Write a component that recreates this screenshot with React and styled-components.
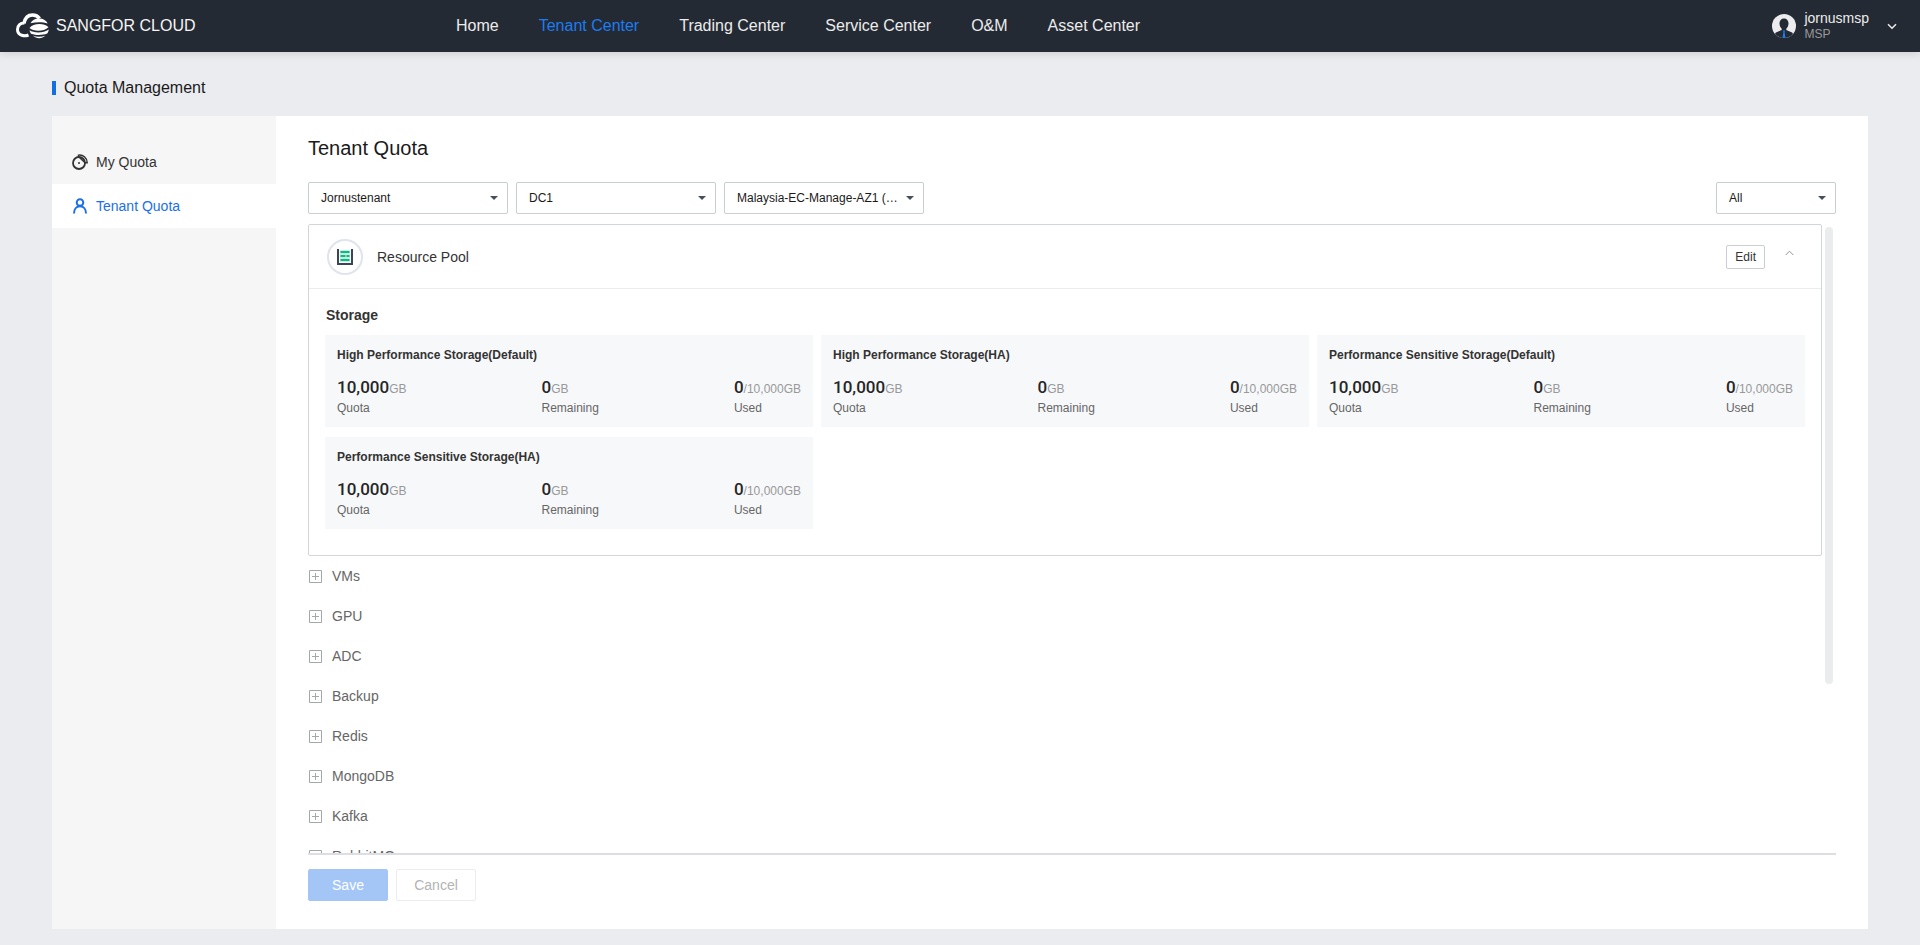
import React, { useState } from "react";
import styled, { createGlobalStyle } from "styled-components";

const GlobalStyle = createGlobalStyle`
  *, *::before, *::after {
    box-sizing: border-box;
  }

  body {
    margin: 0;
    background: #ebecf0;
    color: #333;
    font-family: "Liberation Sans", Arial, sans-serif;
    font-size: 14px;
  }

  button, select {
    font-family: inherit;
    color: inherit;
  }

  h1, h2, h3, h4, p, dl, dd, ul {
    margin: 0;
    padding: 0;
  }
`;

const Page = styled.div`
  height: 100vh;
  display: flex;
  flex-direction: column;
`;

const Header = styled.header`
  flex: none;
  height: 52px;
  display: flex;
  align-items: center;
  background: #242a33;
  box-shadow: 0 2px 8px rgba(0, 0, 0, 0.12);
`;

const Brand = styled.a`
  width: 456px;
  padding-left: 16px;
  display: flex;
  align-items: center;
  gap: 6px;
  color: #f5f5f5;
  font-size: 16px;
  text-decoration: none;
`;

const Nav = styled.nav`
  flex: 1;
  display: flex;
  gap: 40px;
`;

const NavLink = styled.a`
  color: ${(props) => (props.$active ? "#1c7cf2" : "#ececed")};
  font-size: 16px;
  line-height: 50px;
  text-decoration: none;
`;

const UserMenu = styled.button`
  display: flex;
  align-items: center;
  gap: 8px;
  padding: 0 23px 0 0;
  border: 0;
  background: none;
  text-align: left;
  cursor: pointer;
`;

const UserText = styled.span`
  display: flex;
  flex-direction: column;
  margin-right: 10px;
`;

const UserName = styled.span`
  color: #ececed;
  font-size: 14px;
  line-height: 16px;
`;

const UserRole = styled.span`
  color: #98999c;
  font-size: 12px;
  line-height: 16px;
`;

const Body = styled.div`
  flex: 1;
  min-height: 0;
  display: flex;
  flex-direction: column;
  padding: 0 52px 16px;
`;

const PageTitle = styled.h1`
  display: flex;
  align-items: center;
  gap: 8px;
  height: 64px;
  padding-top: 7px;
  color: #1a1a1a;
  font-size: 16px;
  font-weight: normal;

  &::before {
    content: "";
    width: 4px;
    height: 14px;
    background: #136ee0;
  }
`;

const Panel = styled.div`
  flex: 1;
  min-height: 0;
  display: flex;
  background: #fff;
`;

const Sidebar = styled.nav`
  flex: none;
  width: 224px;
  padding-top: 24px;
  background: #f6f6f6;
`;

const SideItem = styled.button`
  width: 100%;
  height: 44px;
  display: flex;
  align-items: center;
  gap: 8px;
  padding: 0 20px;
  border: 0;
  background: ${(props) => (props.$active ? "#fff" : "transparent")};
  color: ${(props) => (props.$active ? "#1b6fe8" : "#333")};
  font-size: 14px;
  cursor: pointer;
`;

const Main = styled.main`
  flex: 1;
  min-width: 0;
  display: flex;
  flex-direction: column;
  padding: 0 32px 28px;
`;

const MainTitle = styled.h2`
  color: #1a1a1a;
  font-size: 20px;
  font-weight: normal;
  line-height: 64px;
`;

const Filters = styled.div`
  display: flex;
  gap: 8px;
  margin-top: 2px;
  margin-bottom: 10px;
`;

const SelectBox = styled.label`
  position: relative;
  width: ${(props) => props.$width};
  margin-left: ${(props) => (props.$end ? "auto" : "0")};

  &::after {
    content: "";
    position: absolute;
    top: 14px;
    right: 10px;
    border: 4px solid transparent;
    border-top-color: #474f5c;
    border-bottom: 0;
    pointer-events: none;
  }
`;

const Select = styled.select`
  width: 100%;
  height: 32px;
  padding: 0 20px 0 12px;
  border: 1px solid #c9cdd6;
  border-radius: 2px;
  background: #fff;
  color: #1a1a1a;
  font-size: 12px;
  appearance: none;
`;

const ScrollArea = styled.div`
  flex: 1;
  min-height: 0;
  display: flex;
  gap: 3px;
  overflow: hidden;
  border-bottom: 2px solid #dcdee3;
`;

const List = styled.div`
  flex: 1;
  min-width: 0;
`;

const Track = styled.div`
  width: 8px;
  margin-right: 3px;
  padding-top: 3px;
`;

const Thumb = styled.div`
  height: 73%;
  border-radius: 4px;
  background: #ebecee;
`;

const Card = styled.section`
  border: 1px solid #d3d5dc;
  border-radius: 2px;
`;

const CardHeader = styled.div`
  height: 64px;
  display: flex;
  align-items: center;
  padding: 0 19px 0 18px;
  border-bottom: 1px solid #ebecf0;
`;

const PoolIcon = styled.span`
  width: 36px;
  height: 36px;
  display: flex;
  align-items: center;
  justify-content: center;
  border: 2px solid #e1e4ed;
  border-radius: 50%;
`;

const CardTitle = styled.h3`
  flex: 1;
  margin-left: 14px;
  font-size: 14px;
  font-weight: normal;
`;

const EditButton = styled.button`
  height: 24px;
  padding: 0 8px;
  border: 1px solid #c9cdd6;
  border-radius: 2px;
  background: #fff;
  font-size: 12px;
  cursor: pointer;
`;

const FoldButton = styled.button`
  display: flex;
  margin-left: 12px;
  padding: 0 8px 8px;
  border: 0;
  background: none;
  cursor: pointer;
`;

const CardBody = styled.div`
  padding: 16px 16px 26px;
`;

const GroupTitle = styled.h4`
  margin-bottom: 10px;
  padding-left: 1px;
  font-size: 14px;
  line-height: 20px;
`;

const Tiles = styled.div`
  display: grid;
  grid-template-columns: repeat(3, 1fr);
  gap: 10px 8px;
`;

const Tile = styled.article`
  padding: 12px 12px 10px;
  background: #f7f8fa;
`;

const TileTitle = styled.h5`
  margin: 0 0 16px;
  font-size: 12px;
  line-height: 16px;
`;

const Stats = styled.dl`
  display: flex;
  justify-content: space-between;
`;

const Stat = styled.div`
  display: flex;
  flex-direction: column-reverse;
`;

const StatLabel = styled.dt`
  color: #666;
  font-size: 12px;
  line-height: 18px;
`;

const StatValue = styled.dd`
  height: 20px;
  color: #999;
  font-size: 12px;
  line-height: 20px;

  strong {
    color: #262626;
    font-family: Roboto, "Liberation Sans", sans-serif;
    font-size: 17px;
    font-weight: 500;
    line-height: 1;
  }
`;

const Group = styled.button`
  width: 100%;
  height: 40px;
  display: flex;
  align-items: center;
  gap: 10px;
  padding: 0 1px;
  border: 0;
  background: none;
  color: #666;
  font-size: 14px;
  cursor: pointer;
`;

const Footer = styled.div`
  flex: none;
  display: flex;
  gap: 8px;
  padding-top: 14px;
`;

const FooterButton = styled.button`
  width: 80px;
  height: 32px;
  border: 1px solid ${(props) => (props.$primary ? "#a3c6f7" : "#ebecf0")};
  border-radius: 2px;
  background: ${(props) => (props.$primary ? "#a3c6f7" : "#fff")};
  color: ${(props) => (props.$primary ? "#fff" : "#b3b3b3")};
  font-size: 14px;
`;

const Logo = () => (
  <svg width="34" height="26" viewBox="0 0 34 26" fill="none">
    <path
      d="M12.500 22C9 23.500 1.500 23 1.500 16.500C1.500 12.500 4.500 9.800 8.500 10"
      stroke="#fff"
      strokeWidth="3"
    />
    <path
      d="M8 10.500C9 4.500 12.500 2 16.500 2C19.500 2 22 3.200 23.500 5.500"
      stroke="#fff"
      strokeWidth="3.500"
    />
    <path d="M14.500 10.300C16 7.500 19 5.500 23 5.500C27.500 5.500 30.500 7.500 31.700 10.500C27 8.800 20 8.800 14.500 10.300Z" fill="#fff" />
    <path d="M13.500 15C17 10 28 9.500 32.500 14.200C28 18.500 18 19 13.500 15Z" fill="#fff" />
    <path d="M13.500 17.300C18 20.300 27.500 20.300 32.800 16.500C32.500 18.300 32 19.500 31.200 20.600C26.500 22.500 20 22.500 15 20.700C14.200 19.600 13.700 18.500 13.500 17.300Z" fill="#fff" />
    <path d="M17 22.800C20.500 24 25.500 24 29.300 22.700C26 26 20.500 26 17 22.800Z" fill="#fff" />
  </svg>
);

const Avatar = () => (
  <svg width="24" height="24" viewBox="0 0 24 24">
    <circle cx="12" cy="12" r="12" fill="#ececee" />
    <path
      d="M12 4.500C9 4.500 7.300 6.800 7.500 9.800C7.600 12 8.600 13.700 9.700 14.800V16L4.500 18.200C3.600 18.600 3.200 19.200 3 20C5.300 22.600 8.500 24 12 24C15.500 24 18.700 22.600 21 20C20.800 19.200 20.400 18.600 19.500 18.200L14.300 16V14.800C15.400 13.700 16.400 12 16.500 9.800C16.700 6.800 15 4.500 12 4.500Z"
      fill="#242a33"
    />
    <path d="M11 16.500H13L12.600 18.300L13.500 24H10.500L11.400 18.300Z" fill="#1c7cf2" />
  </svg>
);

const QuotaIcon = () => (
  <svg width="16" height="16" viewBox="0 0 16 16" fill="none" stroke="currentColor">
    <circle cx="7" cy="9" r="6" strokeWidth="1.800" />
    <path d="M6.500 3.500V1.200C11 .6 15 3.500 15.200 8.800H12.500" strokeWidth="1.500" />
    <path d="M7.500 3.500L12.800 8.500" strokeWidth="1.500" />
    <circle cx="7" cy="9" r="1" fill="currentColor" stroke="none" />
  </svg>
);

const TenantIcon = () => (
  <svg width="16" height="16" viewBox="0 0 16 16" fill="none" stroke="currentColor" strokeWidth="2">
    <circle cx="8" cy="4.500" r="3.300" />
    <path d="M2 15.500C2 11.300 4.300 8.300 8 8.300C11.700 8.300 14 11.300 14 15.500" />
  </svg>
);

const StorageIcon = () => (
  <svg width="16" height="16" viewBox="0 0 16 16">
    <path d="M0 0H2V14H14V0H16V16H0Z" fill="#3b4559" />
    <path d="M3 1H13V13H3Z" fill="#c5efe1" />
    <path d="M3.500 2H12.500V4H3.500ZM3.500 6H8.500V8H3.500ZM9.500 6H12.500V8H9.500ZM3.500 10H12.500V12H3.500Z" fill="#0fb880" />
  </svg>
);

const PlusBox = () => (
  <svg width="13" height="13" viewBox="0 0 13 13" fill="none" stroke="#a3a8ad">
    <path d="M.5 .5H12.500V12.500H.5ZM3 6.500H10M6.500 3V10" />
  </svg>
);

const tiles = [
  "High Performance Storage(Default)",
  "High Performance Storage(HA)",
  "Performance Sensitive Storage(Default)",
  "Performance Sensitive Storage(HA)",
];

const groups = ["VMs", "GPU", "ADC", "Backup", "Redis", "MongoDB", "Kafka", "RabbitMQ"];

const navItems = [
  "Home",
  "Tenant Center",
  "Trading Center",
  "Service Center",
  "O&M",
  "Asset Center",
];

const Filter = ({ label, value, width = "200px", end }) => (
  <SelectBox $width={width} $end={end}>
    <Select aria-label={label}>
      <option>{value}</option>
    </Select>
  </SelectBox>
);

const StorageTile = ({ title }) => (
  <Tile>
    <TileTitle>{title}</TileTitle>
    <Stats>
      <Stat>
        <StatLabel>Quota</StatLabel>
        <StatValue>
          <strong>10,000</strong>GB
        </StatValue>
      </Stat>
      <Stat>
        <StatLabel>Remaining</StatLabel>
        <StatValue>
          <strong>0</strong>GB
        </StatValue>
      </Stat>
      <Stat>
        <StatLabel>Used</StatLabel>
        <StatValue>
          <strong>0</strong>/10,000GB
        </StatValue>
      </Stat>
    </Stats>
  </Tile>
);

const ResourcePool = () => {
  const [open, setOpen] = useState(true);

  return (
    <Card>
      <CardHeader>
        <PoolIcon>
          <StorageIcon />
        </PoolIcon>
        <CardTitle>Resource Pool</CardTitle>
        <EditButton>Edit</EditButton>
        <FoldButton aria-label="Fold" aria-expanded={open} onClick={() => setOpen(!open)}>
          <svg width="9" height="6" viewBox="0 0 9 6" fill="none" stroke="#8f9499">
            <path d={open ? "M.7 5L4.500 1.200L8.300 5" : "M.7 1L4.500 4.800L8.300 1"} />
          </svg>
        </FoldButton>
      </CardHeader>
      {open && (
        <CardBody>
          <GroupTitle>Storage</GroupTitle>
          <Tiles>
            {tiles.map((title) => (
              <StorageTile key={title} title={title} />
            ))}
          </Tiles>
        </CardBody>
      )}
    </Card>
  );
};

const App = () => {
  const [tab, setTab] = useState("tenant");

  return (
    <>
      <GlobalStyle />
      <Page>
        <Header>
          <Brand href="#">
            <Logo />
            SANGFOR CLOUD
          </Brand>
          <Nav>
            {navItems.map((item) => (
              <NavLink key={item} href="#" $active={item === "Tenant Center"}>
                {item}
              </NavLink>
            ))}
          </Nav>
          <UserMenu>
            <Avatar />
            <UserText>
              <UserName>jornusmsp</UserName>
              <UserRole>MSP</UserRole>
            </UserText>
            <svg width="10" height="7" viewBox="0 0 10 7" fill="none" stroke="#ececed" strokeWidth="1.500">
              <path d="M1 1.200L5 5.200L9 1.200" />
            </svg>
          </UserMenu>
        </Header>
        <Body>
          <PageTitle>Quota Management</PageTitle>
          <Panel>
            <Sidebar>
              <SideItem $active={tab === "my"} onClick={() => setTab("my")}>
                <QuotaIcon />
                My Quota
              </SideItem>
              <SideItem $active={tab === "tenant"} onClick={() => setTab("tenant")}>
                <TenantIcon />
                Tenant Quota
              </SideItem>
            </Sidebar>
            <Main>
              <MainTitle>Tenant Quota</MainTitle>
              <Filters>
                <Filter label="Tenant" value="Jornustenant" />
                <Filter label="Data center" value="DC1" />
                <Filter label="Zone" value="Malaysia-EC-Manage-AZ1 (…" />
                <Filter label="Type" value="All" width="120px" end />
              </Filters>
              <ScrollArea>
                <List>
                  <ResourcePool />
                  {groups.map((group) => (
                    <Group key={group}>
                      <PlusBox />
                      {group}
                    </Group>
                  ))}
                </List>
                <Track>
                  <Thumb />
                </Track>
              </ScrollArea>
              <Footer>
                <FooterButton $primary disabled>
                  Save
                </FooterButton>
                <FooterButton disabled>Cancel</FooterButton>
              </Footer>
            </Main>
          </Panel>
        </Body>
      </Page>
    </>
  );
};

export default App;
